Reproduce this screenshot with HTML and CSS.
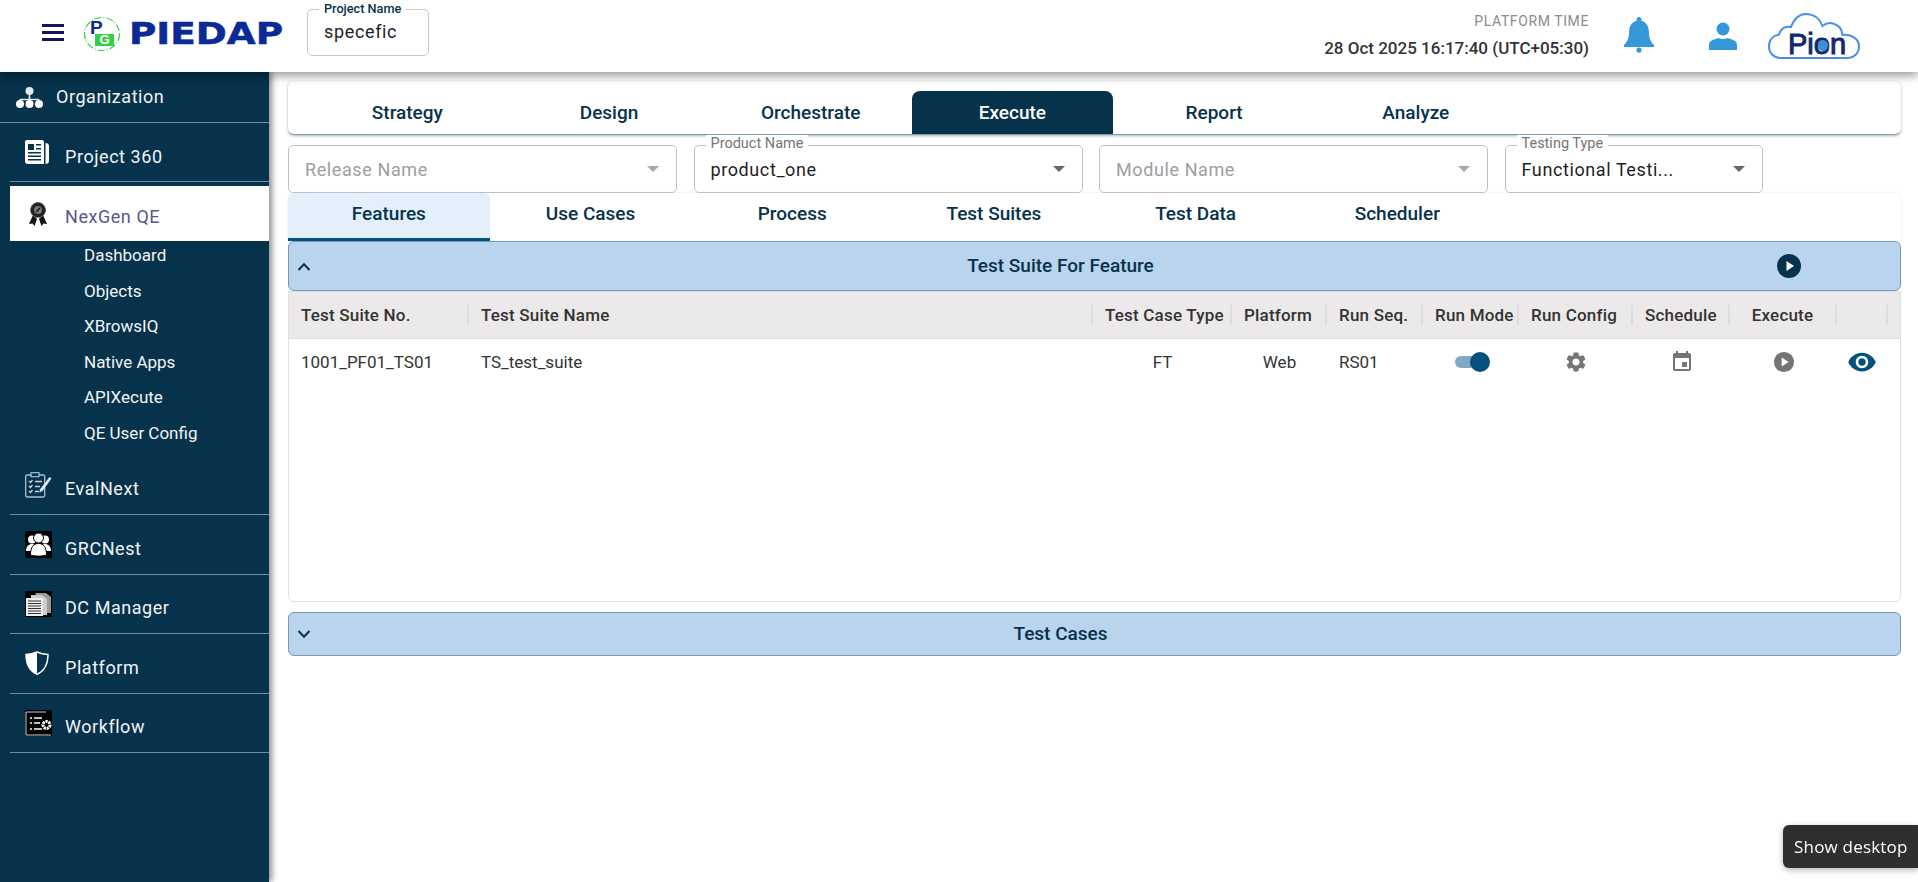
FILE: index.html
```html
<!DOCTYPE html>
<html lang="en">
<head>
    <meta charset="UTF-8">
    <meta name="viewport" content="width=device-width, initial-scale=1.0">
    <title>PIEDAP</title>
    <link rel="stylesheet" href="styles.css">
</head>
<body>
    <header class="topbar">
        <div class="menu-btn"><span></span><span></span><span></span></div>
        <div class="logo">
            <div class="logo-mark">
                <svg width="38" height="36" viewBox="0 0 38 36"><ellipse cx="19" cy="18" rx="17.5" ry="16.5" fill="none" stroke="#35d04a" stroke-width="1.2" stroke-dasharray="7 2 1 2"/></svg>
                <span class="logo-p">P</span>
                <span class="logo-g">G</span>
            </div>
            <div class="logo-word"><span>PIEDAP</span></div>
        </div>
        <div class="project-box">
            <span class="project-label">Project Name</span>
            <span class="project-value">specefic</span>
        </div>
        <div class="topbar-right">
            <div class="clock">
                <div class="clock-label">PLATFORM TIME</div>
                <div class="clock-time">28 Oct 2025 16:17:40 (UTC+05:30)</div>
            </div>
            <svg class="bell" width="32" height="38" viewBox="0 0 34 38"><path fill="#3498db" d="M17 0c1.600 0 2.600 1.200 2.600 2.800v1C24.800 5.200 27.500 9.700 27.500 15.500c0 6.500 1.500 10 5.500 14.200v2H1v-2c4-4.200 5.500-7.700 5.500-14.200 0-5.800 2.700-10.300 7.900-11.700v-1C14.400 1.200 15.400 0 17 0z"/><circle cx="17" cy="35" r="2.800" fill="#3498db"/></svg>
            <svg class="user" width="28" height="28" viewBox="0 0 28 28"><circle cx="14" cy="7" r="6.500" fill="#3498db"/><path fill="#3498db" d="M0 28v-5c0-3 1.500-4.500 5-5.600 2-.6 4-1.100 5-1.400 1.500 1.300 6.500 1.300 8 0 1 .3 3 .8 5 1.400 3.500 1.100 5 2.600 5 5.600v5z"/></svg>
            <div class="pion">
                <svg width="92" height="46" viewBox="0 0 92 46"><path fill="none" stroke="#4a90e8" stroke-width="2" d="M13 45C6 45 1 40 1 33.500 1 27 5 22.500 11 21.500 13 15 18 13 23 14 26 6 31 1 38 1c8 0 14 5 16.500 12 3-2.500 7-3.500 10.500-2.500 6 1.500 9 6 9.500 11.500C84 21 91 26 91 33.500 91 40 86 45 79 45z"/></svg>
                <span class="pion-text">Pion</span>
                <span class="pion-globe"></span>
            </div>
        </div>
    </header>

    <div class="layout">
        <aside class="sidebar">
            <div class="nav-row nav-org">
                <svg class="nav-icon" width="27" height="21" viewBox="0 0 27 21"><circle cx="13.500" cy="4" r="4" fill="#e4e8ec"/><path fill="none" stroke="#e4e8ec" stroke-width="1.600" d="M13.500 7v6M4.500 15v-2.500h18V15"/><circle cx="4" cy="17" r="4" fill="#fff"/><circle cx="13.500" cy="17" r="4" fill="#fff"/><circle cx="23" cy="17" r="4" fill="#fff"/></svg>
                <span class="nav-text">Organization</span>
            </div>
            <div class="nav-row nav-project">
                <svg class="nav-icon" width="24" height="24" viewBox="0 0 24 24"><path fill="#fff" d="M2 0h15c1.200 0 2 .8 2 2v22H3c-1.800 0-3-1.200-3-3V2C0 .8.800 0 2 0zM20.500 3c2 .3 3.500 1 3.500 3v15c0 2-1.500 3-3.500 3z"/><path fill="#06324b" d="M3 4h6v6H3zM11 4h5v1.600h-5zM11 8h5v1.600h-5zM3 12h13v1.600H3zM3 15.500h13v1.600H3zM3 19h13v1.600H3z"/></svg>
                <span class="nav-text">Project 360</span>
            </div>
            <div class="nav-row nav-active">
                <svg class="nav-icon" width="18" height="24" viewBox="0 0 18 24"><path fill="#111" d="M4 13L0 22l3.500-.5L5.500 24 8 17zM14 13l4 9-3.500-.5-2 2.500L10 17z"/><circle cx="9" cy="8" r="7.500" fill="#222" stroke="#555" stroke-dasharray="2 1"/><circle cx="9" cy="8" r="4" fill="#777"/><path stroke="#111" stroke-width="1.300" d="M7 10l4-4"/></svg>
                <span class="nav-text">NexGen QE</span>
            </div>
            <nav class="submenu">
                <a>Dashboard</a>
                <a>Objects</a>
                <a>XBrowsIQ</a>
                <a>Native Apps</a>
                <a>APIXecute</a>
                <a>QE User Config</a>
            </nav>
            <div class="nav-row">
                <svg class="nav-icon" width="27" height="26" viewBox="0 0 27 26"><rect x=".7" y="3" width="19" height="22" rx="1.500" fill="none" stroke="#a9c0cf" stroke-width="1.300"/><rect x="6" y=".7" width="8" height="4" fill="#06324b" stroke="#a9c0cf" stroke-width="1.200"/><path fill="none" stroke="#c5d5df" stroke-width="1.300" d="M4 9l1.500 1.500L7.500 8M10 9.500h7M4 14l1.500 1.500L7.500 13M10 14.500h5M4 19l1.500 1.500L7.500 18M10 19.500h4"/><path fill="#dfe8ee" d="M24.500 5l2 1.500-9 12.500-3 1.500.5-3.200z"/></svg>
                <span class="nav-text">EvalNext</span>
            </div>
            <div class="nav-row">
                <svg class="nav-icon" width="27" height="27" viewBox="0 0 27 27"><rect width="27" height="27" fill="#000"/><circle cx="7" cy="8.500" r="4" fill="#fff"/><circle cx="20" cy="8.500" r="4" fill="#fff"/><path fill="#fff" d="M1 20c0-5 3-7 6-7s4 2 4 7zM16 20c0-5 1-7 4-7s6 2 6 7z"/><circle cx="13.500" cy="7" r="5" fill="#fff" stroke="#000"/><path fill="#fff" stroke="#000" d="M5.500 24c0-8 3-11.500 8-11.500s8 3.500 8 11.500c-3 1.500-13 1.500-16 0z"/></svg>
                <span class="nav-text">GRCNest</span>
            </div>
            <div class="nav-row">
                <svg class="nav-icon" width="27" height="26" viewBox="0 0 27 26"><rect width="27" height="26" fill="#000"/><path fill="#999" d="M10 2h11l5 4v16h-5z"/><path fill="#ccc" d="M6 4h11l5 4v16H6z"/><rect x="1" y="7" width="17" height="18" fill="#eee"/><path stroke="#333" d="M3 10h13M3 12.500h13M3 15h13M3 17.500h13M3 20h13M3 22.500h13"/></svg>
                <span class="nav-text">DC Manager</span>
            </div>
            <div class="nav-row">
                <svg class="nav-icon" width="24" height="24" viewBox="0 0 24 24"><path fill="none" stroke="#fff" stroke-width="1.400" d="M12 1c3.500 1.700 7 2.400 11 2.500 0 9-2.500 16-11 19.800C3.500 19.500 1 12.500 1 3.500 5 3.400 8.500 2.700 12 1z"/><path fill="#fff" d="M12 1C8.500 2.700 5 3.400 1 3.500c0 9 2.500 16 11 19.800z"/></svg>
                <span class="nav-text">Platform</span>
            </div>
            <div class="nav-row">
                <svg class="nav-icon" width="27" height="26" viewBox="0 0 27 26"><rect width="27" height="26" rx="1" fill="#000"/><path fill="none" stroke="#ccc" d="M1 25V2h20M1 25h25"/><path stroke="#fff" stroke-width="1.500" d="M5 8h2M9 8h8M5 13h2M9 13h6M5 19h2M9 19h8"/><circle cx="21.500" cy="15" r="3.500" fill="none" stroke="#fff" stroke-width="3" stroke-dasharray="2.200 .8"/></svg>
                <span class="nav-text">Workflow</span>
            </div>
        </aside>

        <main class="content">
            <div class="tabs top-tabs">
                <div class="tab">Strategy</div>
                <div class="tab">Design</div>
                <div class="tab">Orchestrate</div>
                <div class="tab tab-dark">Execute</div>
                <div class="tab">Report</div>
                <div class="tab">Analyze</div>
            </div>

            <div class="filters">
                <div class="select select-wide is-empty">
                    <span class="select-value">Release Name</span><i class="caret"></i>
                </div>
                <div class="select select-wide">
                    <span class="select-label">Product Name</span>
                    <span class="select-value">product_one</span><i class="caret"></i>
                </div>
                <div class="select select-wide is-empty">
                    <span class="select-value">Module Name</span><i class="caret"></i>
                </div>
                <div class="select select-small">
                    <span class="select-label">Testing Type</span>
                    <span class="select-value">Functional Testi...</span><i class="caret"></i>
                </div>
            </div>

            <div class="tabs sub-tabs">
                <div class="tab tab-light">Features</div>
                <div class="tab">Use Cases</div>
                <div class="tab">Process</div>
                <div class="tab">Test Suites</div>
                <div class="tab">Test Data</div>
                <div class="tab">Scheduler</div>
            </div>

            <div class="accordion accordion-open">
                <svg class="chevron" width="14" height="9" viewBox="0 0 14 9"><path fill="none" stroke="#06324b" stroke-width="2" d="M1.500 8L7 2.200 12.500 8"/></svg>
                <span class="accordion-title">Test Suite For Feature</span>
                <svg class="accordion-play" width="24" height="24" viewBox="0 0 24 24"><circle cx="12" cy="12" r="12" fill="#06324b"/><path fill="#fff" d="M9.500 7l7.500 5-7.500 5z"/></svg>
            </div>

            <div class="grid-box">
                <div class="grid-head">
                    <div class="cell">Test Suite No.</div>
                    <div class="cell">Test Suite Name</div>
                    <div class="cell">Test Case Type</div>
                    <div class="cell">Platform</div>
                    <div class="cell">Run Seq.</div>
                    <div class="cell">Run Mode</div>
                    <div class="cell">Run Config</div>
                    <div class="cell">Schedule</div>
                    <div class="cell cell-center">Execute</div>
                    <div class="cell"></div>
                </div>
                <div class="grid-row">
                    <div class="cell">1001_PF01_TS01</div>
                    <div class="cell">TS_test_suite</div>
                    <div class="cell cell-center">FT</div>
                    <div class="cell cell-center">Web</div>
                    <div class="cell">RS01</div>
                    <div class="cell cell-center"><span class="toggle"></span></div>
                    <div class="cell cell-center">
                        <svg width="24" height="24" viewBox="0 0 24 24"><path fill="#757575" d="M19.140 12.940c.04-.3.060-.61.060-.94 0-.32-.020-.64-.070-.94l2.030-1.580c.18-.14.23-.41.120-.61l-1.920-3.320c-.12-.22-.37-.29-.59-.22l-2.390.96c-.5-.38-1.030-.7-1.620-.94l-.36-2.540c-.04-.24-.24-.41-.48-.41h-3.840c-.24 0-.43.17-.47.41l-.36 2.540c-.59.24-1.130.57-1.620.94l-2.390-.96c-.22-.08-.47 0-.59.22L2.740 8.870c-.12.21-.08.47.12.61l2.030 1.580c-.05.3-.09.63-.09.94s.020.64.070.94l-2.030 1.580c-.18.14-.23.41-.12.61l1.920 3.320c.12.22.37.29.59.22l2.390-.96c.5.38 1.030.7 1.620.94l.36 2.540c.05.24.24.41.48.41h3.840c.24 0 .44-.17.47-.41l.36-2.540c.59-.24 1.130-.56 1.620-.94l2.390.96c.22.080.47 0 .59-.22l1.920-3.320c.12-.22.070-.47-.12-.61l-2.010-1.580zM12 15.600c-1.980 0-3.600-1.620-3.600-3.600s1.620-3.600 3.600-3.600 3.600 1.620 3.600 3.600-1.620 3.600-3.600 3.600z"/></svg>
                    </div>
                    <div class="cell cell-center">
                        <svg width="24" height="24" viewBox="0 0 24 24"><path fill="#757575" d="M17 12h-5v5h5v-5zM16 1v2H8V1H6v2H5c-1.110 0-1.990.9-1.990 2L3 19c0 1.100.89 2 2 2h14c1.100 0 2-.9 2-2V5c0-1.100-.9-2-2-2h-1V1h-2zm3 18H5V8h14v11z"/></svg>
                    </div>
                    <div class="cell cell-center">
                        <svg width="22" height="22" viewBox="0 0 24 24"><circle cx="12" cy="12" r="11" fill="#757575"/><path fill="#fff" d="M9.500 7l7.500 5-7.500 5z"/></svg>
                    </div>
                    <div class="cell cell-center">
                        <svg class="eye" width="30" height="30" viewBox="0 0 24 24"><path fill="#04517f" d="M12 4.500C7 4.500 2.730 7.610 1 12c1.730 4.390 6 7.500 11 7.500s9.270-3.110 11-7.500c-1.730-4.390-6-7.500-11-7.500zM12 17c-2.760 0-5-2.240-5-5s2.240-5 5-5 5 2.240 5 5-2.240 5-5 5zm0-8c-1.660 0-3 1.340-3 3s1.340 3 3 3 3-1.340 3-3-1.340-3-3-3z"/></svg>
                    </div>
                </div>
            </div>

            <div class="accordion accordion-closed">
                <svg class="chevron" width="14" height="9" viewBox="0 0 14 9"><path fill="none" stroke="#06324b" stroke-width="2" d="M1.500 1L7 6.800 12.500 1"/></svg>
                <span class="accordion-title">Test Cases</span>
            </div>
        </main>
    </div>

    <div class="desktop-tip">Show desktop</div>
</body>
</html>
```

FILE: styles.css
```css
* {
    box-sizing: border-box;
}

html,
body {
    height: 100%;
}

body {
    margin: 0;
    overflow: hidden;
    background-color: #fff;
    font-family: 'Roboto', 'Liberation Sans', sans-serif;
    color: #06324b;
}

/* top bar */
.topbar {
    position: relative;
    z-index: 3;
    display: flex;
    align-items: center;
    height: 72px;
    padding-left: 42px;
    background-color: #fff;
    box-shadow: 0 3px 10px rgba(0, 0, 0, 0.45);
}

.menu-btn {
    display: flex;
    flex-direction: column;
    gap: 4px;
    width: 22px;
    margin-bottom: 7px;
}

.menu-btn span {
    height: 3px;
    background-color: #15135e;
}

.logo {
    display: flex;
    align-items: center;
    margin-left: 19px;
    margin-bottom: 4px;
}

.logo-mark {
    position: relative;
    width: 38px;
    height: 36px;
}

.logo-p {
    position: absolute;
    top: 5px;
    left: 7px;
    font: 700 19px/13px 'Liberation Sans', sans-serif;
    color: #0a2a96;
}

.logo-g {
    position: absolute;
    top: 18px;
    left: 12px;
    width: 19px;
    height: 12px;
    background-color: #35d04a;
    color: #fff;
    font: 700 13px/12px 'Liberation Sans', sans-serif;
    text-align: center;
}

.logo-word {
    width: 153px;
    margin-left: 8px;
}

.logo-word span {
    display: inline-block;
    font: 700 30px/30px 'DejaVu Sans', sans-serif;
    color: #0a2a96;
    -webkit-text-stroke: 0.5px #0a2a96;
    transform: scaleX(1.245);
    transform-origin: left center;
}

.project-box {
    position: relative;
    width: 122px;
    height: 47px;
    margin-left: 25px;
    margin-bottom: 7px;
    padding: 11px 16px 0;
    border: 1px solid #c8c8c8;
    border-radius: 5px;
}

.project-label {
    position: absolute;
    top: -9px;
    left: 11px;
    padding: 0 5px;
    background-color: #fff;
    font-size: 12.7px;
    font-weight: 500;
    line-height: 16px;
    white-space: nowrap;
}

.project-value {
    font-size: 18px;
    letter-spacing: 0.65px;
    color: #222;
}

.topbar-right {
    display: flex;
    align-items: center;
    margin-left: auto;
    padding-right: 58px;
}

.clock {
    margin-bottom: 3px;
    text-align: right;
}

.clock-label {
    font-size: 14px;
    line-height: 18px;
    letter-spacing: 0.6px;
    color: #8c8c8c;
}

.clock-time {
    margin-top: 8px;
    font-size: 17px;
    font-weight: 500;
    line-height: 20px;
    color: #333;
}

.bell {
    margin-left: 34px;
    margin-bottom: 3px;
}

.user {
    margin-left: 54px;
}

.pion {
    position: relative;
    width: 92px;
    height: 46px;
    margin-left: 31px;
}

.pion-text {
    position: absolute;
    top: 17px;
    left: 20px;
    font: 400 29px/29px 'Liberation Sans', sans-serif;
    color: #13286f;
    -webkit-text-stroke: 1px #13286f;
}

.pion-globe {
    position: absolute;
    top: 27px;
    left: 50px;
    width: 10px;
    height: 11px;
    border-radius: 50%;
    background-color: #3f8ecf;
}

/* sidebar */
.layout {
    display: flex;
    height: 810px;
}

.sidebar {
    position: relative;
    z-index: 2;
    flex: 0 0 269px;
    background-color: #06324b;
    color: #f2f4f6;
    box-shadow: 3px 0 6px rgba(0, 0, 0, 0.45);
}

.nav-row {
    display: flex;
    align-items: center;
    height: 59.5px;
    margin-left: 10px;
    padding-left: 15px;
    border-bottom: 1px solid #7088a8;
}

.nav-icon {
    flex: none;
}

.nav-text {
    position: relative;
    top: 4px;
    font-size: 18px;
    letter-spacing: 0.55px;
}

.nav-row .nav-text {
    margin-left: auto;
    width: 204px;
}

.nav-org {
    height: 51px;
    margin-left: 0;
    padding-left: 16px;
}

.nav-org .nav-text {
    top: -1px;
    width: 213px;
}

.nav-project {
    height: 59px;
}

.nav-active {
    height: 55px;
    margin-top: 4px;
    padding-left: 19px;
    background-color: #fff;
    color: #55598c;
    border-bottom: 0;
}

.nav-active .nav-text {
    top: 3px;
}

.submenu {
    display: flex;
    flex-direction: column;
    gap: 15.5px;
    padding: 4px 0 13px 84px;
}

.submenu a {
    font-size: 17px;
    line-height: 20px;
}

/* main area */
.content {
    flex: 1;
    padding: 9px 17px 0 19px;
    min-width: 0;
}

.tabs {
    display: flex;
    background-color: #fff;
}

.tab {
    display: flex;
    align-items: center;
    justify-content: center;
    width: 201.7px;
    font-size: 19px;
    font-weight: 500;
}

.top-tabs {
    height: 54px;
    padding: 10px 0 0 18.5px;
    border-radius: 6px;
    border-bottom: 1px solid #7d9fb8;
    box-shadow: 0 1px 3px rgba(0, 0, 0, 0.3);
}

.top-tabs .tab {
    padding-bottom: 1px;
}

.tab-dark {
    background-color: #06324b;
    color: #fff;
    border-radius: 8px 8px 0 0;
}

.filters {
    display: flex;
    gap: 16.5px;
    height: 48px;
    margin-top: 10px;
}

.select {
    position: relative;
    display: flex;
    align-items: center;
    justify-content: space-between;
    height: 48px;
    padding: 0 17px 0 16px;
    border: 1px solid #c0c0c0;
    border-radius: 5px;
}

.select-wide {
    width: 389px;
}

.select-small {
    width: 258px;
}

.select-value {
    font-size: 18px;
    letter-spacing: 0.6px;
    color: #1f1f1f;
}

.is-empty .select-value {
    color: #9e9e9e;
}

.select-label {
    position: absolute;
    top: -11px;
    left: 11px;
    padding: 0 5px;
    background-color: #fff;
    font-size: 14.5px;
    line-height: 18px;
    color: #757575;
}

.caret {
    width: 0;
    height: 0;
    border-left: 6px solid transparent;
    border-right: 6px solid transparent;
    border-top: 6px solid #666;
}

.is-empty .caret {
    border-top-color: #a8a8a8;
}

.sub-tabs {
    height: 48px;
    border-radius: 6px 6px 0 0;
    box-shadow: 0 0 2px rgba(0, 0, 0, 0.12);
}

.tab-light {
    padding-bottom: 5px;
    background-color: #e3f0fb;
    border-bottom: 3px solid #04517f;
    border-radius: 6px 6px 0 0;
}

.sub-tabs .tab:not(.tab-light) {
    padding-bottom: 8px;
}

.accordion {
    position: relative;
    display: flex;
    align-items: center;
    justify-content: center;
    padding-right: 68px;
    background-color: #b9d4ec;
    border: 1px solid #6f9bbd;
    border-radius: 6px;
}

.accordion-open {
    height: 50px;
}

.accordion-closed {
    height: 44px;
    margin-top: 10px;
}

.accordion-title {
    margin-top: -2px;
    font-size: 19px;
    font-weight: 500;
}

.chevron {
    position: absolute;
    left: 8px;
    top: 50%;
    margin-top: -4px;
}

.accordion-play {
    position: absolute;
    right: 99px;
    top: 12px;
}

.grid-box {
    height: 311px;
    border: 1px solid #e0e0e0;
    border-radius: 0 0 6px 6px;
}

.grid-head,
.grid-row {
    display: grid;
    grid-template-columns: 180px 624px 139px 95px 96px 96px 114px 97px 107px 51px;
}

.grid-head {
    align-items: center;
    height: 47px;
    background-color: #ece9ea;
    border-bottom: 1px solid #e0e0e0;
    font-size: 17px;
    font-weight: 500;
    letter-spacing: 0.2px;
    color: #333;
}

.grid-head .cell {
    height: 20px;
    line-height: 20px;
    border-right: 2px solid #dfdcdd;
    white-space: nowrap;
}

.grid-row {
    align-items: center;
    height: 46px;
    font-size: 17px;
    color: #333;
}

.cell {
    padding-left: 12px;
}

.cell-center {
    display: flex;
    justify-content: center;
    align-items: center;
    padding-left: 0;
}

.eye {
    margin-right: 2px;
}

.toggle {
    position: relative;
    width: 34px;
    height: 12px;
    margin-left: 2px;
    border-radius: 6px;
    background-color: #80a8c0;
}

.toggle::after {
    content: "";
    position: absolute;
    top: -4px;
    right: -1px;
    width: 20px;
    height: 20px;
    border-radius: 50%;
    background-color: #04517f;
}

.desktop-tip {
    position: fixed;
    right: 0;
    bottom: 14px;
    display: flex;
    align-items: center;
    width: 135px;
    height: 43px;
    padding-left: 11px;
    background-color: #2f2f2f;
    border-radius: 6px 0 0 6px;
    box-shadow: 0 2px 6px rgba(0, 0, 0, 0.3);
    font: 17px 'Open Sans', sans-serif;
    letter-spacing: 0.2px;
    color: #fff;
    z-index: 5;
}
```
